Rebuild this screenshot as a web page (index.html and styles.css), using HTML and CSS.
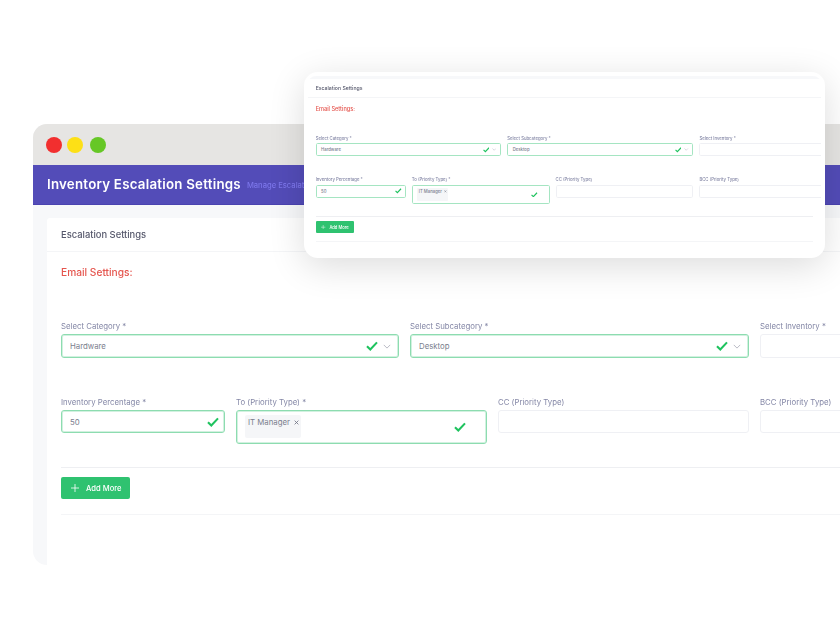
FILE: index.html
```html
<!DOCTYPE html>
<html lang="en">
<head>
<meta charset="utf-8">
<title>Inventory Escalation Settings</title>
<link rel="stylesheet" href="styles.css">
</head>
<body>
<main class="stage">
  <section class="window">
    <div class="titlebar">
      <span class="dot dot-red"></span><span class="dot dot-yellow"></span><span class="dot dot-green"></span>
    </div>
    <header class="appbar">
      <h1 class="app-title">Inventory Escalation Settings</h1>
      <span class="app-sub">Manage Escalation</span>
    </header>
    <div class="window-body">
      <div class="panel">
        <h2 class="panel-title">Escalation Settings</h2>
        <div class="panel-body">
          <h3 class="email-title">Email Settings:</h3>
          <div class="row row-three">
            <div class="field"><label class="label">Select Category *</label>
              <div class="box valid"><span class="value">Hardware</span>
                <svg class="check" viewBox="0 0 12 10"><path d="M1 5.2 4.3 8.5 11 1.4"/></svg>
                <svg class="chev" viewBox="0 0 10 6"><path d="M1 1 5 5 9 1"/></svg></div></div>
            <div class="field"><label class="label">Select Subcategory *</label>
              <div class="box valid"><span class="value">Desktop</span>
                <svg class="check" viewBox="0 0 12 10"><path d="M1 5.2 4.3 8.5 11 1.4"/></svg>
                <svg class="chev" viewBox="0 0 10 6"><path d="M1 1 5 5 9 1"/></svg></div></div>
            <div class="field"><label class="label">Select Inventory *</label><div class="box"></div></div>
          </div>
          <div class="row row-four">
            <div class="field"><label class="label">Inventory Percentage *</label>
              <div class="box valid"><span class="value">50</span>
                <svg class="check check-end" viewBox="0 0 12 10"><path d="M1 5.2 4.3 8.5 11 1.4"/></svg></div></div>
            <div class="field"><label class="label">To (Priority Type) *</label>
              <div class="box valid box-tall"><span class="tag">IT Manager<svg class="tag-x" viewBox="0 0 8 8"><path d="M1 1 7 7M7 1 1 7"/></svg></span>
                <svg class="check check-tall" viewBox="0 0 12 10"><path d="M1 5.2 4.3 8.5 11 1.4"/></svg></div></div>
            <div class="field"><label class="label">CC (Priority Type)</label><div class="box"></div></div>
            <div class="field"><label class="label">BCC (Priority Type)</label><div class="box"></div></div>
          </div>
          <hr class="rule rule-top">
          <button class="add-btn" type="button"><svg class="plus" viewBox="0 0 10 10"><path d="M5 0V10M0 5H10"/></svg>Add More</button>
          <hr class="rule rule-bottom">
        </div>
      </div>
    </div>
  </section>

  <section class="float-card">
    <div class="float-clip">
      <div class="panel panel-mini">
        <h2 class="panel-title">Escalation Settings</h2>
        <div class="panel-body">
          <h3 class="email-title">Email Settings:</h3>
          <div class="row row-three">
            <div class="field"><label class="label">Select Category *</label>
              <div class="box valid"><span class="value">Hardware</span>
                <svg class="check" viewBox="0 0 12 10"><path d="M1 5.2 4.3 8.5 11 1.4"/></svg>
                <svg class="chev" viewBox="0 0 10 6"><path d="M1 1 5 5 9 1"/></svg></div></div>
            <div class="field"><label class="label">Select Subcategory *</label>
              <div class="box valid"><span class="value">Desktop</span>
                <svg class="check" viewBox="0 0 12 10"><path d="M1 5.2 4.3 8.5 11 1.4"/></svg>
                <svg class="chev" viewBox="0 0 10 6"><path d="M1 1 5 5 9 1"/></svg></div></div>
            <div class="field"><label class="label">Select Inventory *</label><div class="box"></div></div>
          </div>
          <div class="row row-four">
            <div class="field"><label class="label">Inventory Percentage *</label>
              <div class="box valid"><span class="value">50</span>
                <svg class="check check-end" viewBox="0 0 12 10"><path d="M1 5.2 4.3 8.5 11 1.4"/></svg></div></div>
            <div class="field"><label class="label">To (Priority Type) *</label>
              <div class="box valid box-tall"><span class="tag">IT Manager<svg class="tag-x" viewBox="0 0 8 8"><path d="M1 1 7 7M7 1 1 7"/></svg></span>
                <svg class="check check-tall" viewBox="0 0 12 10"><path d="M1 5.2 4.3 8.5 11 1.4"/></svg></div></div>
            <div class="field"><label class="label">CC (Priority Type)</label><div class="box"></div></div>
            <div class="field"><label class="label">BCC (Priority Type)</label><div class="box"></div></div>
          </div>
          <hr class="rule rule-top">
          <button class="add-btn" type="button"><svg class="plus" viewBox="0 0 10 10"><path d="M5 0V10M0 5H10"/></svg>Add More</button>
          <hr class="rule rule-bottom">
        </div>
      </div>
    </div>
  </section>
</main>
</body>
</html>
```
FILE: styles.css
```css
* { box-sizing: border-box; }
html, body { margin: 0; height: 100%; background: #fff; }
body { font-family: Inter, "Open Sans", "Liberation Sans", sans-serif; overflow: hidden; }
.stage { position: relative; width: 840px; height: 640px; overflow: hidden; background: #fff; }

/* base window */
.window {
  position: absolute; left: 33px; top: 124px; width: 807px; height: 441px;
  border-radius: 14px 0 0 14px; overflow: hidden; background: #f7f8fa;
  filter: blur(.4px);
}
.titlebar { height: 41px; background: #e6e5e3; display: flex; align-items: center; padding: 1px 0 0 13px; }
.dot { width: 16px; height: 16px; border-radius: 50%; }
.dot-red { background: #f22f2f; }
.dot-yellow { background: #fde016; margin-left: 5px; }
.dot-green { background: #66c726; margin-left: 7px; }
.appbar {
  height: 40px; background: #534cb8; border-bottom: 1px solid #4a43b0;
  display: flex; align-items: center; padding: 0 0 2px 14px; color: #fff;
}
.app-title { margin: 0; font-size: 13.3px; font-weight: 600; letter-spacing: .018em; white-space: nowrap; }
.app-sub { margin: 4px 0 0 6px; font-size: 7.6px; color: #7c76ea; font-weight: 500; white-space: nowrap; }
.window-body { padding: 13px 0 0 14px; }

/* form panel */
.panel { width: 1120px; height: 360px; background: #fff; border-radius: 3px 3px 0 0; }
.panel-title {
  margin: 0; height: 34px; padding: 0 14px; line-height: 33px;
  border-bottom: 1px solid #f4f5f7; font-size: 9.4px; font-weight: 500; color: #55576b;
}
.panel-body { padding: 0 14px; }
.email-title { margin: 12px 0 40px; height: 16px; line-height: 16px; font-size: 10.2px; font-weight: 500; color: #e5554e; }
.row { display: grid; column-gap: 11px; align-items: start; }
.row-three { grid-template-columns: 338px 339px 338px; margin-bottom: 38px; }
.row-four { grid-template-columns: 164px 251px 251px 338px; }
.label { display: block; height: 12px; line-height: 12px; margin-bottom: 2px; font-size: 7.8px; font-weight: 400; color: #8487a6; white-space: nowrap; }
.box {
  position: relative; display: flex; align-items: center; height: 24px; padding: 0 8px;
  background: #fff; border: 1px solid #eff0f4; border-radius: 3px;
}
.row-four .box { height: 23px; }
.row-four .box.box-tall { height: 34px; align-items: flex-start; padding: 4px 8px; }
.valid { border-color: #8ddcb0; box-shadow: inset 0 0 0 1px #d2f1e0; }
.value { flex: 1; font-size: 7.8px; font-weight: 400; color: #7b7e8e; }
.check { width: 12px; height: 10px; fill: none; stroke: #1fc35f; stroke-width: 2.1; }
.check-end { margin-right: -3px; }
.check-tall { margin: 7px 12px 0 auto; }
.chev { width: 8px; height: 5px; margin: 0 -1px 0 5px; fill: none; stroke: #a9abb8; stroke-width: 1; }
.tag {
  display: block; width: 56px; height: 23px; padding: 2px 0 0 3px;
  background: #f5f6f8; border-radius: 2px; font-size: 7.8px; line-height: 11px; font-weight: 400;
  color: #7b7e8e; white-space: nowrap;
}
.tag-x { width: 5px; height: 5px; margin-left: 4px; fill: none; stroke: #6c6f80; stroke-width: 1.3; }
.rule { border: 0; height: 1px; margin: 0; background: #eeeff2; }
.rule-top { margin-top: 23px; }
.rule-bottom { margin-top: 15px; background: #f4f5f7; }
.add-btn {
  display: flex; align-items: center; width: 69px; height: 22px; margin-top: 9px; padding: 0 0 0 10px;
  border: 0; border-radius: 2px; background: #2fc270; color: #fff;
  font: 500 7.6px Inter, "Open Sans", sans-serif;
}
.plus { width: 8px; height: 8px; margin-right: 7px; fill: none; stroke: #fff; stroke-width: 1; }

/* floating screenshot card */
.float-card {
  position: absolute; left: 304px; top: 72px; width: 521px; height: 186px; padding: 4px 4px 0;
  background: #fff; border-radius: 14px; box-shadow: 0 8px 36px rgba(0, 0, 0, .14);
}
.float-clip { height: 178px; padding-top: 3px; overflow: hidden; background: linear-gradient(#f7f8fa 3px, #fff 3px); border-radius: 8px 8px 0 0; filter: blur(.5px); }
.panel-mini { zoom: .549; width: 934px; height: 320px; overflow: hidden; }
.panel-mini .email-title { margin-top: 13px; }
.panel-mini .label, .panel-mini .value, .panel-mini .tag { font-weight: 500; }
.panel-mini .valid { border-width: 2px; box-shadow: none; border-color: #a5e5c2; }
.panel-mini .rule-top { margin-top: 22px; }
.panel-mini .rule-bottom { margin-top: 14px; }
```
